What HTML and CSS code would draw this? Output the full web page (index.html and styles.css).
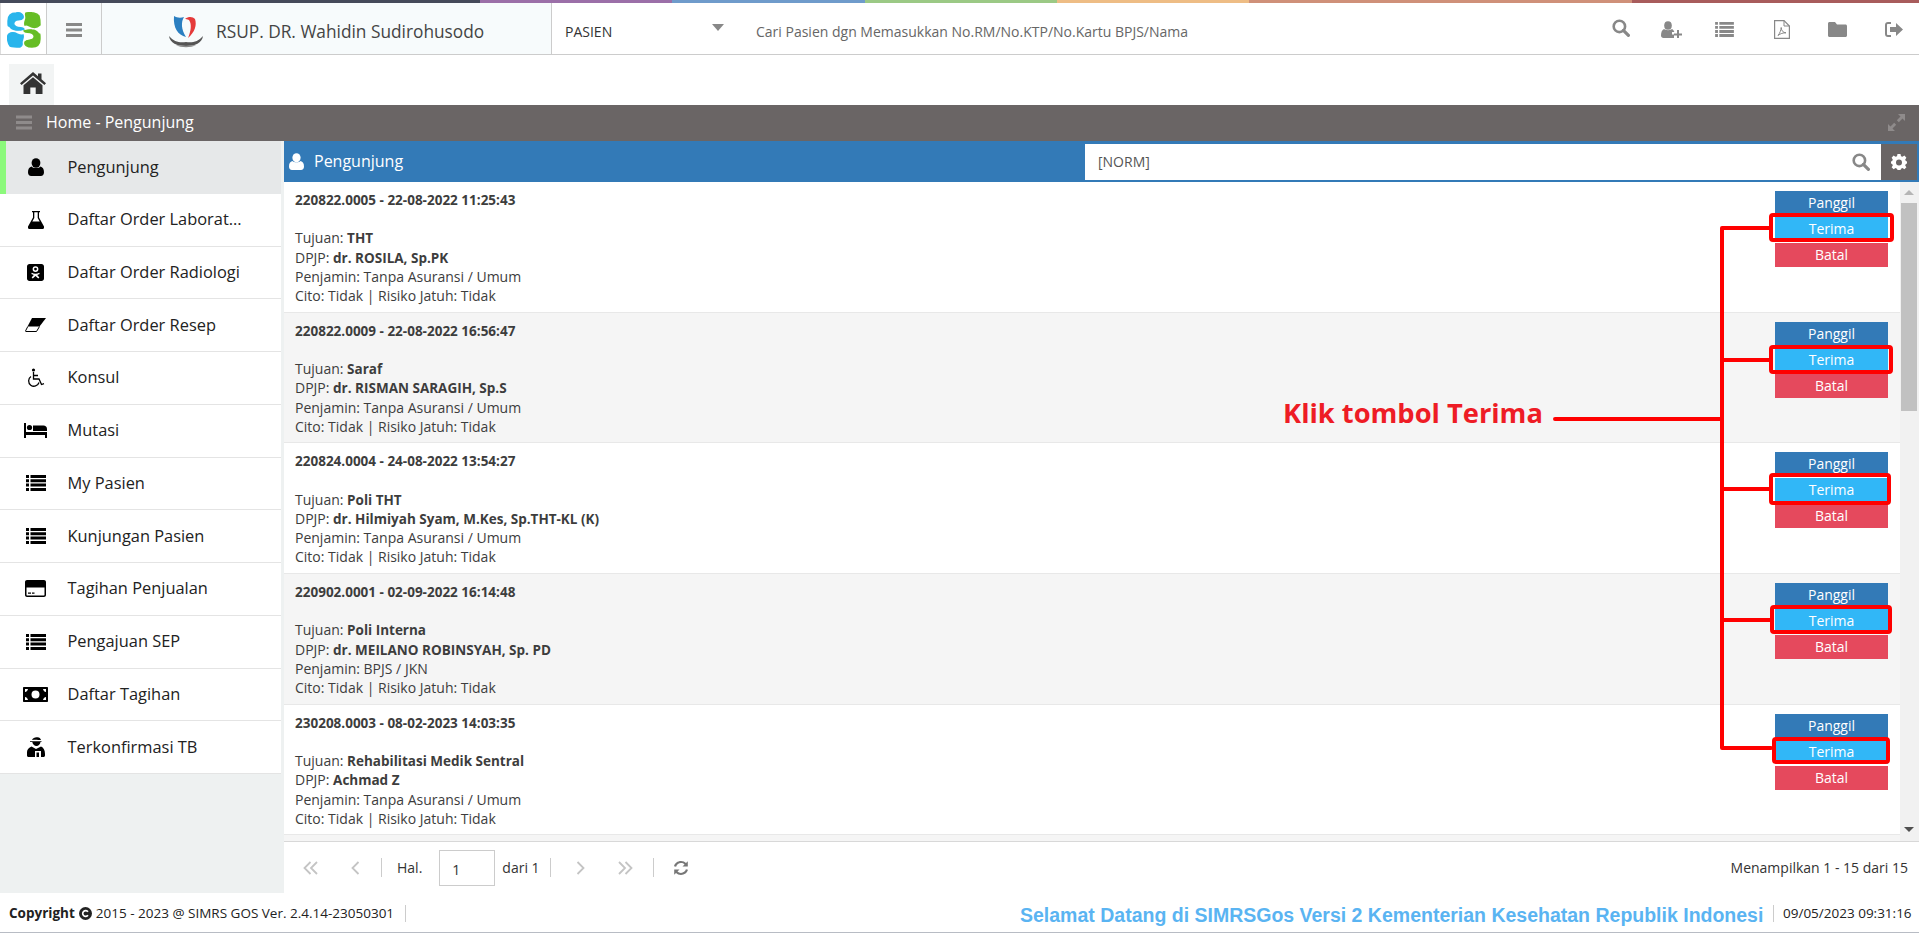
FILE: index.html
```html
<!DOCTYPE html>
<html lang="en">
<head>
    <meta charset="UTF-8">
    <title>SIMRS GOS - Pengunjung</title>
    <link rel="stylesheet" href="styles.css">
</head>
<body>
    <svg class="icon-defs" width="0" height="0">
        <defs>
            <symbol id="i-user" viewBox="0 0 16 18">
                <ellipse cx="8" cy="5" rx="4.4" ry="4.8"/>
                <path d="M3.6 8.4C5 10.4 11 10.4 12.4 8.4C14.6 9 16 10.8 16 14.2C16 16.4 14.8 18 12.8 18H3.2C1.2 18 0 16.4 0 14.2C0 10.8 1.4 9 3.6 8.4Z"/>
            </symbol>
            <symbol id="i-search" viewBox="0 0 18 18">
                <circle cx="7.4" cy="7.4" r="5.7" fill="none" stroke="currentColor" stroke-width="2.6"/>
                <path d="M11.4 11.4L16.4 16.4" fill="none" stroke="currentColor" stroke-width="3.2" stroke-linecap="round"/>
            </symbol>
            <symbol id="i-list" viewBox="0 0 20 16">
                <path d="M0 0h3v3H0zM4.5 0H20v3H4.5zM0 4.3h3v3H0zM4.5 4.3H20v3H4.5zM0 8.6h3v3H0zM4.5 8.6H20v3H4.5zM0 12.9h3v3H0zM4.5 12.9H20v3H4.5z"/>
            </symbol>
            <symbol id="i-bars" viewBox="0 0 16 14">
                <path d="M0 0h16v3H0zM0 5.5h16v3H0zM0 11h16v3H0z"/>
            </symbol>
        </defs>
    </svg>

    <div class="stripe">
        <span class="s1"></span><span class="s2"></span><span class="s3"></span><span class="s4"></span><span class="s5"></span><span class="s6"></span><span class="s7"></span>
    </div>

    <header class="topbar">
        <div class="logo-cell">
            <svg width="34" height="36" viewBox="0 0 34 36">
                <g fill="#29b5ec" stroke="#29b5ec" stroke-width="1.4">
                    <path d="M9 1C14 0 17 3 16 6C14 9 10 7 8 9C5 12 8 15 11 15.500C14 16 16 15 17 17C14 18 12 18.500 9 18C5 17.500 3 16 2 13C1 16 1 12 1 9C1 4 4 1 9 1Z"/>
                    <path d="M1 23C2 21 5 20 8 21C11 22 13 24 16 23C17 26 15 28 15 30C15 33 16 34 13 35C10 35 6 35 3 34C1 32 0 26 1 23Z"/>
                </g>
                <g fill="#66bd25" stroke="#66bd25" stroke-width="1.4">
                    <path d="M19 1C24 0 30 1 32 4C33 7 33 11 33 13C31 15 28 16 25 15C22 14 20 12 18 13C17 10 19 8 19 6C19 3 18 2 19 1Z"/>
                    <path d="M17 19C20 18 22 17.500 25 18C29 18.500 31 20 32 23C33 20 33 24 33 27C33 32 30 35 25 35C20 35 17 33 18 30C20 27 24 29 26 27C29 24 26 21 23 20.500C20 20 18 21 17 19Z"/>
                </g>
            </svg>
        </div>
        <div class="menu-cell"><svg class="ic-bars" width="16" height="14"><use href="#i-bars"/></svg></div>
        <div class="brand-cell">
            <svg class="brand-logo" width="36" height="32" viewBox="0 0 36 32">
                <path fill="#2b7fc1" d="M6 0C9 2 13 2 16 1C13 6 13 13 18 21C10 19 5 12 6 0Z"/>
                <path fill="#e53a3a" d="M17 3C21 0 25 1 27 3C29 9 27 16 20 22C23 15 24 8 21 4C19 3 18 3 17 3Z"/>
                <path fill="#555" d="M1 20C6 26 12 27 18 26C24 27 30 26 35 20C34 27 27 30 18 30C9 30 2 27 1 20Z"/>
                <path fill="#888" d="M8 29C13 32 23 32 28 29C23 30 13 30 8 29Z"/>
            </svg>
            <span class="brand-name">RSUP. DR. Wahidin Sudirohusodo</span>
        </div>
        <div class="pasien-select">
            <span>PASIEN</span>
            <span class="caret"></span>
        </div>
        <div class="pasien-search">Cari Pasien dgn Memasukkan No.RM/No.KTP/No.Kartu BPJS/Nama</div>
        <div class="top-icons">
            <svg class="t1" width="18" height="18"><use href="#i-search"/></svg>
            <svg class="t2" width="21" height="17" viewBox="0 0 21 17">
                <ellipse cx="7" cy="4.500" rx="3.800" ry="4.300"/>
                <path d="M3 8C5 9.500 9 9.500 11 8C12 8.500 13 9.500 13.300 11H11V13.500H13V17H2.500C1 17 0 16 0 14.500C0 11 1 9 3 8Z"/>
                <path d="M16 9h2v3.500h3v2h-3V18h-2v-3.500h-3v-2h3z"/>
            </svg>
            <svg class="t3" width="19" height="15"><use href="#i-list"/></svg>
            <svg class="t4" width="16" height="19" viewBox="0 0 16 19">
                <path fill="none" stroke="currentColor" stroke-width="1.200" d="M.6.6H10L15.400 6V18.400H.6Z"/>
                <path fill="none" stroke="currentColor" stroke-width="1" d="M10 .6V6H15.400M4 15.500C6 13 7 10 7.200 7.500C7.500 11 9 12.500 12 12.800C9 12.800 6.500 13.500 4 15.500Z"/>
            </svg>
            <svg class="t5" width="19" height="15" viewBox="0 0 19 15">
                <path d="M1.500 0H7L9 2.500H17.500C18.300 2.500 19 3.200 19 4V13.500C19 14.300 18.300 15 17.500 15H1.500C.7 15 0 14.300 0 13.500V1.500C0 .7.700 0 1.500 0Z"/>
            </svg>
            <svg class="t6" width="18" height="15" viewBox="0 0 18 15">
                <path d="M6 0V2H3C2.400 2 2 2.400 2 3V12C2 12.600 2.400 13 3 13H6V15H3C1.200 15 0 13.800 0 12V3C0 1.200 1.200 0 3 0Z"/>
                <path d="M11 1L18 7.500L11 14V10H5V5H11Z"/>
            </svg>
        </div>
    </header>

    <div class="tabs">
        <div class="home-tab">
            <svg width="26" height="22" viewBox="0 0 26 22">
                <path fill="#333" d="M13 0L18 4.300V1.500H21.500V7.300L26 11.200L24.400 13L13 3.400L1.600 13L0 11.200Z"/>
                <path fill="#333" d="M13 5.300L22.500 13.200V22H15.700V15.500H10.300V22H3.500V13.200Z"/>
            </svg>
        </div>
    </div>

    <div class="titlebar">
        <svg class="ic-title" width="16" height="15"><use href="#i-bars"/></svg>
        <span class="title-text">Home - Pengunjung</span>
        <svg class="ic-expand" width="17" height="17" viewBox="0 0 17 17">
            <path d="M10 0H17V7L14.500 4.500L10.800 8.200L8.800 6.200L12.500 2.500ZM7 17H0V10L2.500 12.500L6.200 8.800L8.200 10.800L4.500 14.500Z"/>
        </svg>
    </div>

    <div class="main">
        <nav class="sidebar">
            <a class="nav-item active">
                <span class="nav-icon"><svg width="16" height="18"><use href="#i-user"/></svg></span>
                <span class="nav-label">Pengunjung</span>
            </a>
            <a class="nav-item">
                <span class="nav-icon"><svg width="16" height="18" viewBox="0 0 16 18"><path d="M4 0H12V1.300H11V6.500L16 15.500C16.500 16.800 15.600 18 14.400 18H1.600C.4 18 -.5 16.800 0 15.500L5 6.500V1.300H4ZM6.300 1.300V6.900L4.300 10.500H11.700L9.700 6.900V1.300Z" fill-rule="evenodd"/></svg></span>
                <span class="nav-label">Daftar Order Laborat...</span>
            </a>
            <a class="nav-item">
                <span class="nav-icon"><svg width="17" height="17" viewBox="0 0 17 17"><path fill-rule="evenodd" d="M2.500 0H14.500C15.900 0 17 1.100 17 2.500V14.500C17 15.900 15.900 17 14.500 17H2.500C1.100 17 0 15.900 0 14.500V2.500C0 1.100 1.100 0 2.500 0ZM8.500 2.200A2.900 2.900 0 1 0 8.500 8A2.900 2.900 0 0 0 8.500 2.200ZM8.500 3.700A1.400 1.400 0 1 1 8.500 6.500A1.400 1.400 0 0 1 8.500 3.700ZM4.800 8.800L4.300 10L6.800 11L4.600 13.400L5.800 14.500L8.500 11.900L11.200 14.500L12.400 13.400L10.200 11L12.700 10L12.200 8.800C10 10 7 10 4.800 8.800Z"/></svg></span>
                <span class="nav-label">Daftar Order Radiologi</span>
            </a>
            <a class="nav-item">
                <span class="nav-icon"><svg width="21" height="14" viewBox="0 0 21 14"><path d="M7 0H21L14.500 8.500H2.500Z"/><path fill="none" stroke="#000" stroke-width="1" d="M2.800 8.500L.6 12.800C.4 13.200.6 13.500 1 13.500H11.500L14.500 8.500"/></svg></span>
                <span class="nav-label">Daftar Order Resep</span>
            </a>
            <a class="nav-item">
                <span class="nav-icon"><svg width="19" height="20" viewBox="0 0 19 20"><circle cx="7.500" cy="2" r="1.600"/><path fill="none" stroke="#000" stroke-width="1.300" d="M7.500 4V11H13L15.500 16.500L18 15.700M7.500 7.500H12M5 8.500A5.300 5.300 0 1 0 13 14.500"/></svg></span>
                <span class="nav-label">Konsul</span>
            </a>
            <a class="nav-item">
                <span class="nav-icon"><svg width="23" height="15" viewBox="0 0 23 15"><path d="M0 0H2V9H23V15H21V12H2V15H0Z"/><circle cx="5.500" cy="4.500" r="2.600"/><path d="M9 2.500H19.500C21.500 2.500 23 4 23 6V8H9Z"/></svg></span>
                <span class="nav-label">Mutasi</span>
            </a>
            <a class="nav-item">
                <span class="nav-icon"><svg width="20" height="16"><use href="#i-list"/></svg></span>
                <span class="nav-label">My Pasien</span>
            </a>
            <a class="nav-item">
                <span class="nav-icon"><svg width="20" height="16"><use href="#i-list"/></svg></span>
                <span class="nav-label">Kunjungan Pasien</span>
            </a>
            <a class="nav-item">
                <span class="nav-icon"><svg width="21" height="17" viewBox="0 0 21 17"><path fill-rule="evenodd" d="M2 0H19C20.100 0 21 .9 21 2V15C21 16.100 20.100 17 19 17H2C.9 17 0 16.100 0 15V2C0 .9.900 0 2 0ZM1.500 7.500V15C1.500 15.300 1.700 15.500 2 15.500H19C19.300 15.500 19.500 15.300 19.500 15V7.500ZM3 12.500H6V13.700H3ZM7 12.500H9.500V13.700H7Z"/></svg></span>
                <span class="nav-label">Tagihan Penjualan</span>
            </a>
            <a class="nav-item">
                <span class="nav-icon"><svg width="20" height="16"><use href="#i-list"/></svg></span>
                <span class="nav-label">Pengajuan SEP</span>
            </a>
            <a class="nav-item">
                <span class="nav-icon"><svg width="25" height="15" viewBox="0 0 25 15"><path fill-rule="evenodd" d="M1 0H24C24.600 0 25 .4 25 1V14C25 14.600 24.600 15 24 15H1C.4 15 0 14.600 0 14V1C0 .4.400 0 1 0ZM12.500 3.500A4 4 0 1 0 12.500 11.500A4 4 0 0 0 12.500 3.500ZM2 2V5C3.500 5 4.800 3.500 5 2ZM23 2H20C20.200 3.500 21.500 5 23 5ZM2 13H5C4.800 11.500 3.500 10 2 10ZM23 13V10C21.500 10 20.200 11.500 20 13Z"/></svg></span>
                <span class="nav-label">Daftar Tagihan</span>
            </a>
            <a class="nav-item">
                <span class="nav-icon"><svg width="18" height="20" viewBox="0 0 18 20"><path d="M5 3C6 1 8 0 10.500 .3C12.500 .5 13.500 1.500 14 3H11C9 2.700 7 3 5 3ZM3 4.200H14.500V5H13.500C13.300 7.300 11.500 9 9.500 9C7.500 9 5.500 7.300 5.300 5H3Z"/><path fill-rule="evenodd" d="M4.500 9.500L9 12L14 9.500C16.500 10.500 18 13 18 17V18.500C18 19.300 17.300 20 16.500 20H1.500C.7 20 0 19.300 0 18.500V15C0 12.500 2 10.500 4.500 9.500ZM8 14V20H9.500V15.500H12V20H14V14Z"/></svg></span>
                <span class="nav-label">Terkonfirmasi TB</span>
            </a>
        </nav>

        <section class="content">
            <div class="content-head">
                <svg class="head-user" width="15" height="17"><use href="#i-user"/></svg>
                <span class="head-title">Pengunjung</span>
                <div class="head-search">
                    <span class="norm">[NORM]</span>
                    <svg class="ic-search" width="18" height="18"><use href="#i-search"/></svg>
                </div>
                <div class="gear">
                    <svg width="16" height="16" viewBox="0 0 16 16"><path fill-rule="evenodd" d="M6.500 0H9.500L10 2.200L11.500 2.800L13.400 1.600L15.400 3.700L14.200 5.500L14.800 7L16 7.400V9.500L14.800 10L14.200 11.400L15.400 13.300L13.400 15.300L11.500 14.100L10 14.700L9.500 16H6.500L6 14.700L4.500 14.100L2.600 15.300L.6 13.300L1.800 11.400L1.200 10L0 9.500V7.400L1.200 7L1.800 5.500L.6 3.700L2.600 1.600L4.500 2.800L6 2.200ZM8 5.400A3 3 0 1 0 8 11.400A3 3 0 0 0 8 5.400Z"/></svg>
                </div>
            </div>

            <div class="list-wrap">
                <div class="list">
                    <div class="row">
                        <div class="row-info">
                            <b>220822.0005 - 22-08-2022 11:25:43</b><br><br>
                            Tujuan: <b>THT</b><br>
                            DPJP: <b>dr. ROSILA, Sp.PK</b><br>
                            Penjamin: Tanpa Asuransi / Umum<br>
                            Cito: Tidak | Risiko Jatuh: Tidak
                        </div>
                        <div class="row-actions">
                            <a class="btn btn-panggil">Panggil</a>
                            <a class="btn btn-terima">Terima</a>
                            <a class="btn btn-batal">Batal</a>
                        </div>
                    </div>
                    <div class="row">
                        <div class="row-info">
                            <b>220822.0009 - 22-08-2022 16:56:47</b><br><br>
                            Tujuan: <b>Saraf</b><br>
                            DPJP: <b>dr. RISMAN SARAGIH, Sp.S</b><br>
                            Penjamin: Tanpa Asuransi / Umum<br>
                            Cito: Tidak | Risiko Jatuh: Tidak
                        </div>
                        <div class="row-actions">
                            <a class="btn btn-panggil">Panggil</a>
                            <a class="btn btn-terima">Terima</a>
                            <a class="btn btn-batal">Batal</a>
                        </div>
                    </div>
                    <div class="row">
                        <div class="row-info">
                            <b>220824.0004 - 24-08-2022 13:54:27</b><br><br>
                            Tujuan: <b>Poli THT</b><br>
                            DPJP: <b>dr. Hilmiyah Syam, M.Kes, Sp.THT-KL (K)</b><br>
                            Penjamin: Tanpa Asuransi / Umum<br>
                            Cito: Tidak | Risiko Jatuh: Tidak
                        </div>
                        <div class="row-actions">
                            <a class="btn btn-panggil">Panggil</a>
                            <a class="btn btn-terima">Terima</a>
                            <a class="btn btn-batal">Batal</a>
                        </div>
                    </div>
                    <div class="row">
                        <div class="row-info">
                            <b>220902.0001 - 02-09-2022 16:14:48</b><br><br>
                            Tujuan: <b>Poli Interna</b><br>
                            DPJP: <b>dr. MEILANO ROBINSYAH, Sp. PD</b><br>
                            Penjamin: BPJS / JKN<br>
                            Cito: Tidak | Risiko Jatuh: Tidak
                        </div>
                        <div class="row-actions">
                            <a class="btn btn-panggil">Panggil</a>
                            <a class="btn btn-terima">Terima</a>
                            <a class="btn btn-batal">Batal</a>
                        </div>
                    </div>
                    <div class="row">
                        <div class="row-info">
                            <b>230208.0003 - 08-02-2023 14:03:35</b><br><br>
                            Tujuan: <b>Rehabilitasi Medik Sentral</b><br>
                            DPJP: <b>Achmad Z</b><br>
                            Penjamin: Tanpa Asuransi / Umum<br>
                            Cito: Tidak | Risiko Jatuh: Tidak
                        </div>
                        <div class="row-actions">
                            <a class="btn btn-panggil">Panggil</a>
                            <a class="btn btn-terima">Terima</a>
                            <a class="btn btn-batal">Batal</a>
                        </div>
                    </div>
                    <div class="row"></div>
                </div>
                <div class="scrollbar">
                    <span class="sb-up"></span>
                    <span class="sb-thumb"></span>
                    <span class="sb-down"></span>
                </div>
            </div>

            <div class="pager">
                <svg class="pg-first" width="16" height="14" viewBox="0 0 16 14"><path d="M7.500 1L1.500 7L7.500 13M14 1L8 7L14 13"/></svg>
                <svg class="pg-prev" width="9" height="14" viewBox="0 0 9 14"><path d="M7.500 1L1.500 7L7.500 13"/></svg>
                <span class="pg-sep sep-a"></span>
                <span class="pg-hal">Hal.</span>
                <span class="pg-input">1</span>
                <span class="pg-dari">dari 1</span>
                <span class="pg-sep sep-b"></span>
                <svg class="pg-next" width="9" height="14" viewBox="0 0 9 14"><path d="M1.500 1L7.500 7L1.500 13"/></svg>
                <svg class="pg-last" width="16" height="14" viewBox="0 0 16 14"><path d="M2 1L8 7L2 13M8.500 1L14.500 7L8.500 13"/></svg>
                <span class="pg-sep sep-c"></span>
                <svg class="pg-refresh" width="16" height="16" viewBox="0 0 16 16"><path fill="#777" d="M8 1C10 1 11.800 1.800 13 3L14.800 1.200V6.500H9.500L11.500 4.500C10.600 3.600 9.400 3.100 8 3.100C5.700 3.100 3.700 4.600 3.100 6.700L1 6.200C1.800 3.200 4.600 1 8 1ZM1.200 9.500H6.500L4.500 11.500C5.400 12.400 6.600 12.900 8 12.900C10.300 12.900 12.300 11.400 12.900 9.300L15 9.800C14.200 12.800 11.400 15 8 15C6 15 4.200 14.200 3 13L1.200 14.800Z"/></svg>
                <span class="pg-info">Menampilkan 1 - 15 dari 15</span>
            </div>
        </section>
    </div>

    <footer class="footer">
        <div class="copyright">
            <b>Copyright</b>
            <svg width="13" height="13" viewBox="0 0 12 12"><circle cx="6" cy="6" r="6" fill="#222"/><path d="M8.300 4.400A2.700 2.700 0 1 0 8.300 7.600" fill="none" stroke="#fff" stroke-width="1.500"/></svg>
            <span>2015 - 2023 @ SIMRS GOS Ver. 2.4.14-23050301</span>
        </div>
        <div class="marquee"><span>Selamat Datang di SIMRSGos Versi 2 Kementerian Kesehatan Republik Indonesia</span></div>
        <div class="clock">09/05/2023 09:31:16</div>
    </footer>

    <!-- tutorial annotation on top of the screenshot -->
    <div class="note">Klik tombol Terima</div>
    <svg class="note-lines" width="1919" height="933" viewBox="0 0 1919 933">
        <path class="note-line" d="M1555 419H1722M1722 228V748M1722 228H1771M1722 360H1771M1722 489H1771M1722 620H1771M1722 748H1771"/>
        <rect class="note-box" x="1771" y="215" width="121" height="25" rx="2"/>
        <rect class="note-box" x="1771" y="347" width="120" height="25" rx="2"/>
        <rect class="note-box" x="1771" y="475" width="118" height="28" rx="2"/>
        <rect class="note-box" x="1772" y="607" width="118" height="25" rx="2"/>
        <rect class="note-box" x="1774" y="739" width="114" height="23" rx="2"/>
    </svg>
</body>
</html>
```

FILE: styles.css
```css
* {
    box-sizing: border-box;
}

html, body {
    margin: 0;
    height: 933px;
    overflow: hidden;
}

body {
    position: relative;
    display: flex;
    flex-direction: column;
    background: #fff;
    font-family: 'Open Sans', sans-serif;
    font-size: 14px;
    color: #333;
}

.icon-defs {
    position: absolute;
}

/* Top colour stripe */
.stripe {
    display: flex;
    height: 3px;
    flex: none;
}

.stripe span { display: block; }
.s1 { width: 480px; background: #454a5a; }
.s2 { width: 192px; background: #9b6fa8; }
.s3 { width: 193px; background: #6f9bcb; }
.s4 { width: 192px; background: #9bc985; }
.s5 { width: 192px; background: #eebd85; }
.s6 { width: 383px; background: #cf9079; }
.s7 { flex: 1; background: #a85c5c; }

/* Header */
.topbar {
    display: flex;
    flex: none;
    height: 52px;
    border-bottom: 1px solid #ccc;
}

.logo-cell {
    width: 47px;
    display: flex;
    align-items: center;
    justify-content: center;
    padding-top: 3px;
    border-left: 1px solid #ddd;
    border-right: 1px solid #ccc;
}

.menu-cell {
    width: 55px;
    display: flex;
    align-items: center;
    justify-content: center;
    padding-top: 3px;
    border-right: 1px solid #ccc;
    background: #f7fafb;
}

.ic-bars {
    fill: #888;
}

.brand-cell {
    width: 450px;
    display: flex;
    align-items: center;
    padding: 5px 0 0 66px;
    gap: 12px;
    background: #f7fbfc;
    border-right: 1px solid #ccc;
}

.brand-logo {
    margin-top: 2px;
}

.brand-name {
    font-size: 17.3px;
    color: #444;
}

.pasien-select {
    width: 204px;
    display: flex;
    align-items: center;
    justify-content: space-between;
    padding: 5px 32px 0 13px;
    color: #333;
}

.caret {
    width: 0;
    height: 0;
    margin-top: -8px;
    border-left: 6px solid transparent;
    border-right: 6px solid transparent;
    border-top: 7px solid #888;
}

.pasien-search {
    flex: 1;
    display: flex;
    align-items: center;
    padding-top: 5px;
    color: #666;
}

.top-icons {
    display: flex;
    align-items: center;
    width: 308px;
    padding-top: 2px;
    fill: #888;
    color: #888;
}

.top-icons svg {
    flex: none;
}

.t1 { margin-left: 1px; margin-top: -3px; }
.t2 { margin-left: 31px; }
.t3 { margin-left: 33px; }
.t4 { margin-left: 40px; fill: none; }
.t5 { margin-left: 38px; }
.t6 { margin-left: 38px; }

/* Tab row */
.tabs {
    flex: none;
    height: 50px;
    padding: 9px 0 0 9px;
}

.home-tab {
    width: 45px;
    height: 41px;
    display: flex;
    align-items: center;
    justify-content: center;
    padding: 0 0 3px 2px;
    background: #f2f4f4;
}

/* Title bar */
.titlebar {
    flex: none;
    height: 36px;
    display: flex;
    align-items: center;
    padding: 0 14px 2px 16px;
    background: #6a6565;
    color: #fff;
}

.ic-title {
    fill: #8f8b8b;
}

.title-text {
    flex: 1;
    margin-left: 14px;
    font-size: 16px;
}

.ic-expand {
    fill: #8f8b8b;
}

/* Main area */
.main {
    flex: 1;
    display: flex;
    min-height: 0;
    background: #eef1f1;
}

.sidebar {
    width: 281px;
    flex: none;
    margin-right: 3px;
}

.nav-item {
    display: flex;
    align-items: center;
    height: 52.75px;
    background: #fff;
    border-bottom: 1px solid #e4e4e4;
    color: #222;
    font-size: 16.4px;
}

.nav-item.active {
    background: #e6e8e9;
    border-left: 6px solid #8cf97c;
    border-bottom: none;
}

.nav-icon {
    width: 67.5px;
    padding-left: 4px;
    display: flex;
    justify-content: center;
    flex: none;
    fill: #000;
}

.nav-item.active .nav-icon {
    width: 61.5px;
    padding-left: 0;
    padding-right: 2px;
}

.nav-label {
    padding-bottom: 2px;
}

.content {
    flex: 1;
    min-width: 0;
    display: flex;
    flex-direction: column;
    background: #fff;
}

.content-head {
    flex: none;
    height: 41px;
    display: flex;
    align-items: center;
    padding: 3px 2px 2px 5px;
    background: #337ab7;
    color: #fff;
}

.head-user {
    fill: #fff;
    margin-top: -1px;
}

.head-title {
    width: 771px;
    margin-left: 10px;
    margin-top: -2px;
    font-size: 16px;
}

.head-search {
    flex: 1;
    height: 36px;
    display: flex;
    align-items: center;
    justify-content: space-between;
    padding: 0 11px 0 13px;
    background: #fff;
}

.norm {
    color: #555;
    margin-top: -1px;
}

.ic-search {
    color: #888;
    margin-top: -1px;
}

.gear {
    width: 36px;
    height: 36px;
    display: flex;
    align-items: center;
    justify-content: center;
    background: #6a6565;
    fill: #fff;
}

/* Visit list */
.list-wrap {
    flex: 1;
    min-height: 0;
    display: flex;
}

.list {
    flex: 1;
    min-width: 0;
    overflow: hidden;
}

.row {
    height: 130.7px;
    display: flex;
    justify-content: space-between;
    padding: 8px 12px 0 11px;
    border-bottom: 1px solid #e8e8e8;
    font-size: 14px;
    line-height: 19.2px;
    color: #3d3d3d;
}

.row:nth-child(even) {
    background: #f5f5f5;
}

.row-info b {
    font-size: 13.5px;
    line-height: 1;
}

.row-actions {
    width: 113px;
    padding-top: 1px;
    display: flex;
    flex-direction: column;
    gap: 2px;
}

.btn {
    display: block;
    height: 24px;
    line-height: 23px;
    font-size: 14px;
    text-align: center;
    color: #fff;
}

.btn-panggil { background: #337ab7; }
.btn-terima { background: #31b7f7; }
.btn-batal { background: #e5495d; }

.scrollbar {
    width: 19px;
    flex: none;
    display: flex;
    flex-direction: column;
    align-items: center;
    background: #f1f1f1;
    padding-right: 2px;
}

.sb-up, .sb-down {
    width: 0;
    height: 0;
    border-left: 5px solid transparent;
    border-right: 5px solid transparent;
}

.sb-up {
    margin-top: 8px;
    border-bottom: 5px solid #b5b5b5;
}

.sb-thumb {
    width: 16px;
    height: 208px;
    margin-top: 8px;
    background: #c1c1c1;
}

.sb-down {
    margin-top: auto;
    margin-bottom: 9px;
    border-top: 5px solid #505050;
}

/* Pager */
.pager {
    flex: none;
    height: 52px;
    display: flex;
    align-items: center;
    border-top: 1px solid #d8d8d8;
}

.pager svg {
    flex: none;
}

.pager svg path {
    fill: none;
    stroke: #c4c4c4;
    stroke-width: 1.8;
}

.pager .pg-refresh path {
    fill: #777;
    stroke: none;
}

.pg-first { margin-left: 19px; }
.pg-prev { margin-left: 32px; }
.pg-sep { width: 1px; height: 19px; background: #ccc; flex: none; }
.sep-a { margin-left: 21px; }
.pg-hal { margin-left: 15px; }
.pg-input {
    width: 56px;
    height: 36px;
    margin-left: 17px;
    padding: 9px 0 0 12px;
    border: 1px solid #ccc;
    background: #fff;
}
.pg-dari { margin-left: 7px; }
.sep-b { margin-left: 10px; }
.pg-next { margin-left: 25px; }
.pg-last { margin-left: 32px; }
.sep-c { margin-left: 20px; }
.pg-refresh { margin-left: 19px; }
.pg-info { margin-left: auto; margin-right: 11px; }

/* Footer */
.footer {
    flex: none;
    height: 40px;
    display: flex;
    align-items: center;
    padding: 1px 7px 0 9px;
    border-bottom: 1px solid #b8bcc4;
    font-size: 13.5px;
    color: #222;
}

.copyright {
    display: flex;
    align-items: center;
    gap: 4px;
    width: 397px;
    height: 17px;
    border-right: 1px solid #ccc;
}

.marquee {
    width: 743px;
    margin-left: 614px;
    margin-top: 4px;
    overflow: hidden;
    white-space: nowrap;
    font-family: 'Liberation Sans', sans-serif;
    font-weight: 700;
    font-size: 19.5px;
    color: #5ab4f2;
}

.clock {
    margin-left: 10px;
    padding-left: 9px;
    height: 17px;
    line-height: 17px;
    white-space: nowrap;
    border-left: 1px solid #ccc;
}

/* Annotation */
.note {
    position: absolute;
    left: 1283px;
    top: 394px;
    font-size: 27.3px;
    font-weight: 700;
    line-height: 38px;
    color: #ee1c25;
    white-space: nowrap;
}

.note-lines {
    position: absolute;
    left: 0;
    top: 0;
    pointer-events: none;
}

.note-line {
    fill: none;
    stroke: #ff0000;
    stroke-width: 4;
    stroke-linecap: round;
}

.note-box {
    fill: none;
    stroke: #ff0000;
    stroke-width: 4;
}
```
